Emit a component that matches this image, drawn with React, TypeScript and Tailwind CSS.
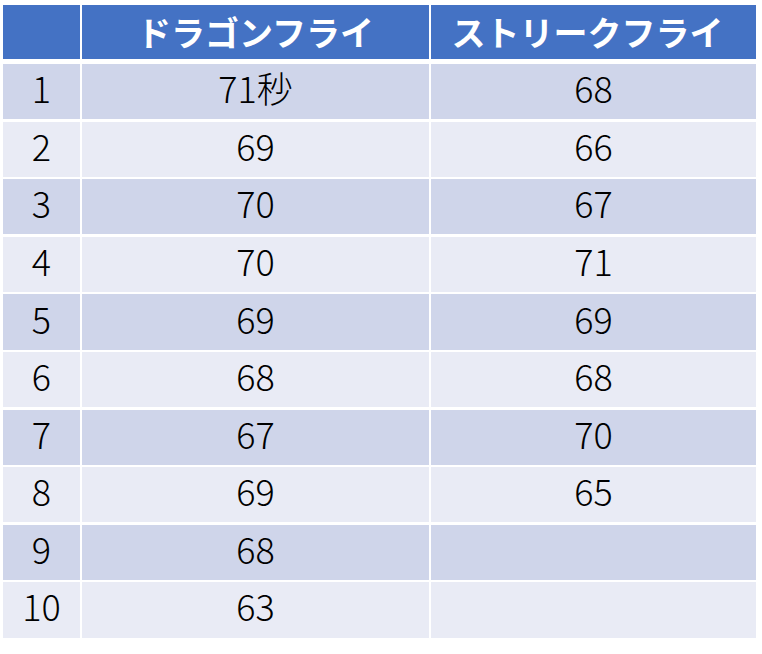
const rows: [string, string, string][] = [
  ['1', '71秒', '68'],
  ['2', '69', '66'],
  ['3', '70', '67'],
  ['4', '70', '71'],
  ['5', '69', '69'],
  ['6', '68', '68'],
  ['7', '67', '70'],
  ['8', '69', '65'],
  ['9', '68', ''],
  ['10', '63', ''],
];

const font = { fontFamily: '"Noto Sans CJK JP", "Noto Sans", sans-serif' };

export default function App() {
  return (
    <div className="h-[654px] w-[762px] bg-white pl-[3px] pt-[5px]" style={font}>
      <div className="grid w-[753px] grid-cols-[77px_346.5px_324.7px] gap-x-[2.3px]">
        <div className="h-[53.5px] bg-[#4472C4]" />
        <div className="flex h-[53.5px] items-center justify-center bg-[#4472C4] text-[34px] font-bold text-white">
          ドラゴンフライ
        </div>
        <div className="flex h-[53.5px] items-center justify-center bg-[#4472C4] pr-[12px] text-[34px] font-bold text-white">
          ストリークフライ
        </div>
      </div>

      <div className="mt-[5.5px] flex w-[753px] flex-col gap-y-[2.3px]">
        {rows.map((r, i) => {
          const bg = i % 2 === 0 ? 'bg-[#CFD5EA]' : 'bg-[#E9EBF5]';
          return (
            <div key={r[0]} className="grid h-[55.3px] grid-cols-[77px_346.5px_324.7px] gap-x-[2.3px]">
              {r.map((c, j) => (
                <div
                  key={j}
                  className={`${bg} flex items-center justify-center pb-[9px] text-[36px] font-light leading-none text-black`}
                >
                  {c}
                </div>
              ))}
            </div>
          );
        })}
      </div>
    </div>
  );
}
